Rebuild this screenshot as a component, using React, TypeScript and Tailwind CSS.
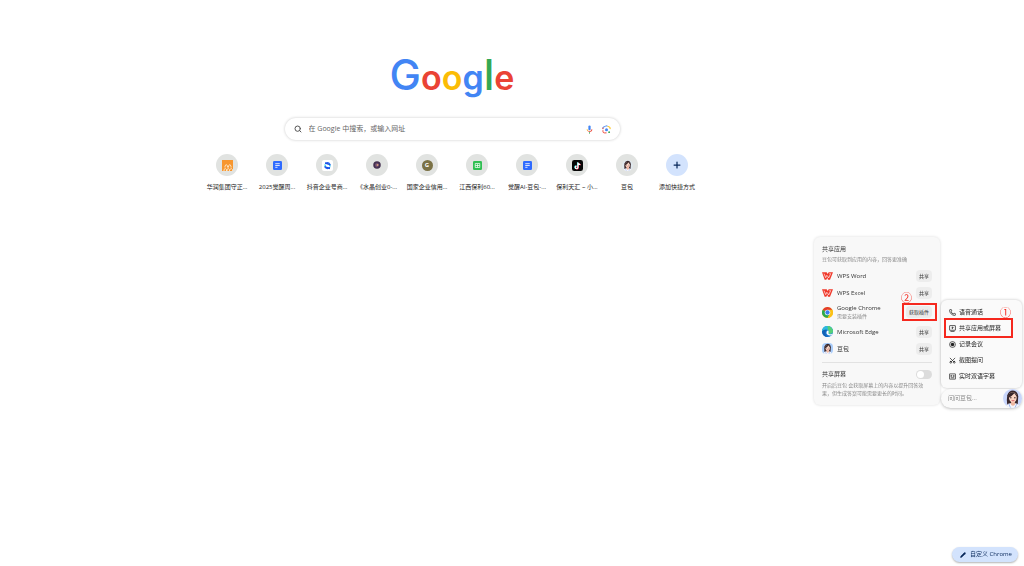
import React, { useState } from 'react';
import { Pencil, Phone, Plus, Scissors, Search } from 'lucide-react';

const DocIcon = () => (
  <svg viewBox="0 0 20 20" className="size-[9px]">
    <rect width="20" height="20" rx="3" fill="#2f6bff" />
    <path d="M5 6h10M5 10h10M5 14h5" stroke="#fff" strokeWidth="1.8" />
  </svg>
);

const CrownIcon = () => (
  <svg viewBox="0 0 22 22" className="size-[11px]">
    <rect width="22" height="22" fill="#f7962f" />
    <path d="M6 15v-3l2.500-3 2.500 3v3M13 15v-3l2.500-3 2.500 3v3M4 22v-3l2.500-2 2.500 2v3M10 22v-3l2.500-2 2.500 2v3M16 19l2.500-2 2.500 2v3" fill="none" stroke="#fff3dc" strokeWidth="1.6" />
  </svg>
);

const SwirlIcon = () => (
  <svg viewBox="0 0 22 22" className="size-[11px]">
    <rect width="22" height="22" rx="4" fill="#fff" />
    <path d="M6 8.500Q7 4 11 4q4 0 6 4.500l-5-1.500z" fill="#1b62f5" />
    <path d="M5 14q1 4 6 4.500 5-.5 6-5l-5 1.500z" fill="#1b62f5" />
    <path d="M5 8v5l3 2v-5zM17 14V9l-3-2v5z" fill="#3fe0ef" />
    <path d="M6 4.500l11 3.500v3L6 7.500zM5 12l11 3.500v3L5 15z" fill="#1b50e5" />
  </svg>
);

const CrystalIcon = () => (
  <svg viewBox="0 0 16 16" className="size-[8px]">
    <circle cx="8" cy="8" r="7.500" fill="#43304f" />
    <path d="M4 6l4-3 4 3-1 5-4 2-3-3z" fill="#6d4d70" />
    <circle cx="9" cy="8" r="2" fill="#d9a27e" />
  </svg>
);

const SheetIcon = () => (
  <svg viewBox="0 0 20 20" className="size-[9px]">
    <rect width="20" height="20" rx="3" fill="#2fbf52" />
    <path d="M5 5.500h10v9H5zM5 10h10M10 7v7" fill="none" stroke="#fff" strokeWidth="1.600" />
  </svg>
);

const NoteIcon = () => (
  <svg viewBox="0 0 24 24" className="size-[11px]">
    <rect width="24" height="24" rx="5" fill="#060606" />
    <path d="M12 5v10.500a3 3 0 1 1-3-3M12 5.500q1 4 5 4" fill="none" stroke="#25f4ee" strokeWidth="2.400" />
    <path d="M14 6v10.500a3 3 0 1 1-3-3M14 6.500q1 4 5 4" fill="none" stroke="#fe2c55" strokeWidth="2.400" />
    <path d="M13 5.500V16a3 3 0 1 1-3-3M13 6q1 4 5 4" fill="none" stroke="#fff" strokeWidth="2.400" />
  </svg>
);

const Avatar = ({ className, background }: { className: string; background: string }) => (
  <svg viewBox="0 0 40 40" className={className}>
    <rect width="40" height="40" fill={background} />
    <path d="M9 34Q7 24 9 13 12 3 21 3q10 1 11 12l-1 18z" fill="#38272b" />
    <path d="M5 40q2-9 10-10h11q8 1 9 10z" fill="#f5f6fb" />
    <path d="M17 25h8v8q-4 4-8 0z" fill="#eeb39c" />
    <path d="M12 16q0-9 9-9 8 1 8 9 0 12-8 13-8-1-9-13z" fill="#fbd5c4" />
    <path d="M10 20Q11 8 20 7q9 0 11 12L24 9q-6 7-14 11z" fill="#38272b" />
    <circle cx="16.500" cy="18.500" r="1.500" fill="#3b2525" />
    <circle cx="25" cy="18.500" r="1.500" fill="#3b2525" />
    <path d="M18 24q3 2 6 0" fill="none" stroke="#cf4b55" strokeWidth="1.800" />
    <path d="M12 31l4 9M29 31l-4 9" stroke="#7d9ce8" strokeWidth="1.500" />
  </svg>
);

const MicIcon = () => (
  <svg viewBox="0 0 24 24" className="h-[9px] w-[9px]">
    <rect x="9" y="1" width="6" height="13" rx="3" fill="#4285f4" />
    <path d="M11 18h2v5h-2z" fill="#34a853" />
    <path d="M4.500 11q0 3 2 5l1.500-1.500Q6.700 13 6.700 11z" fill="#fbbc04" />
    <path d="M17.300 11q0 5-5.300 5-2.500 0-4-1.500L6.500 16q2 2.200 5.500 2.200 7.500-.2 7.500-7.200z" fill="#ea4335" />
  </svg>
);

const LensIcon = () => (
  <svg viewBox="0 0 24 24" className="size-[9px]" fill="none" strokeWidth="2.600">
    <path d="M2.500 10V8q0-3.500 3.500-3.500h2L9.500 2.500h5" stroke="#4285f4" />
    <path d="M14 2.500l2 2h2q3.500 0 3.500 3.500v3" stroke="#fbbc04" />
    <path d="M2.500 14v3q0 4 4 4H12" stroke="#ea4335" />
    <path d="M2.500 7v4" stroke="#ea4335" />
    <circle cx="12" cy="12.500" r="4" fill="#4285f4" />
    <circle cx="19" cy="19" r="2.500" fill="#34a853" />
  </svg>
);

const WpsIcon = () => (
  <svg viewBox="0 0 33 24" className="h-2 w-[11px]">
    <path d="M0 1h14l3 5 3-5h13l-9 22h-6l-2-6-3 6H8z" fill="#f0392b" />
    <path d="M6 5l5 12 4-8M16 11l4 7 6-13h-4" fill="none" stroke="#fff" strokeWidth="2" />
  </svg>
);

const ChromeIcon = () => (
  <svg viewBox="0 0 24 24" className="size-[11px]">
    <circle cx="12" cy="12" r="12" fill="#fbc116" />
    <path d="M12 12 1.600 6A12 12 0 0 1 22.400 6z" fill="#e33b2e" />
    <path d="M12 12 1.600 6A12 12 0 0 0 12 24l5-9z" fill="#2da94f" />
    <path d="M12 6h10.400A12 12 0 0 1 12 24l5-9z" fill="#fbc116" />
    <circle cx="12" cy="12" r="6" fill="#fff" />
    <circle cx="12" cy="12" r="4.700" fill="#3b7ded" />
  </svg>
);

const EdgeIcon = () => (
  <svg viewBox="0 0 24 24" className="size-[11px]">
    <circle cx="12" cy="12" r="12" fill="#1474cf" />
    <path d="M0 12A12 12 0 0 1 24 11q0 6-6 6-4 0-4-2 2-5-3-7-6-1-11 4z" fill="#2fb9dd" />
    <path d="M12 0a12 12 0 0 1 12 11q0 6-6 6-4 0-4-2 2-4-1-7z" fill="#55cf78" />
    <path d="M13 9q-5 3-3 8 3 5 11 3l2-3q-9 3-9-2 2-3-1-6z" fill="#fff" />
    <path d="M10 9Q5 13 8 19q2 4 6 5-12 0-14-12 4-5 10-3z" fill="#1260b4" />
  </svg>
);

const ShareScreenIcon = () => (
  <svg viewBox="0 0 24 24" className="size-[7px]" fill="none" stroke="#222" strokeWidth="2.500">
    <rect x="2" y="2" width="20" height="16" rx="1" />
    <path d="M12 14V7M8.500 10 12 6.500l3.500 3.500M5 22h14" />
  </svg>
);

const RecordIcon = () => (
  <svg viewBox="0 0 24 24" className="size-[7px]">
    <circle cx="12" cy="12" r="10" fill="none" stroke="#222" strokeWidth="2.500" />
    <circle cx="12" cy="12" r="6" fill="#222" />
  </svg>
);

const CaptionIcon = () => (
  <svg viewBox="0 0 24 24" className="size-[7px]" fill="none" stroke="#222" strokeWidth="2.400">
    <rect x="1.500" y="3" width="21" height="18" rx="1" />
    <path d="M5 8.500h6M14 8.500h5M5 12.500h5M13 12.500h6M6 16.500h12" />
  </svg>
);

const shortcuts = [
  { label: '华润集团守正...', icon: <CrownIcon /> },
  { label: '2025觉醒周...', icon: <DocIcon /> },
  { label: '抖音企业号商...', icon: <SwirlIcon /> },
  { label: '《水晶创业0-...', icon: <CrystalIcon /> },
  {
    label: '国家企业信用...',
    icon: <span className="flex size-[11px] items-center justify-center rounded-full bg-[#7a7145] text-[6px] font-bold text-white">G</span>,
  },
  { label: '江西保利60...', icon: <SheetIcon /> },
  { label: '觉醒AI-豆包-...', icon: <DocIcon /> },
  { label: '保利天汇 ~ 小...', icon: <NoteIcon /> },
  { label: '豆包', icon: <Avatar className="size-[11px] rounded-full" background="#dfe8ee" /> },
];

const apps = [
  { name: 'WPS Word', icon: <WpsIcon /> },
  { name: 'WPS Excel', icon: <WpsIcon /> },
  { name: 'Google Chrome', icon: <ChromeIcon />, note: '需要安装插件' },
  { name: 'Microsoft Edge', icon: <EdgeIcon /> },
  { name: '豆包', icon: <Avatar className="size-[11px] rounded-sm" background="#a9cdfb" /> },
];

const menuItems = [
  { label: '语音通话', icon: <Phone size={7} strokeWidth={2.5} /> },
  { label: '共享应用或屏幕', icon: <ShareScreenIcon />, marked: true },
  { label: '记录会议', icon: <RecordIcon /> },
  { label: '截图提问', icon: <Scissors size={7} strokeWidth={2.5} className="-rotate-90" /> },
  { label: '实时双语字幕', icon: <CaptionIcon /> },
];

const Logo = () => (
  <h1 className="font-['Inter',sans-serif] text-[34px] leading-[48px] font-semibold">
    <span className="text-[42px] font-medium text-[#4285f4]">G</span>
    <span className="text-[#ea4335]">o</span>
    <span className="text-[#fbbc05]">o</span>
    <span className="text-[#4285f4]">g</span>
    <span className="text-[42px] font-medium text-[#34a853]">l</span>
    <span className="text-[#ea4335]">e</span>
  </h1>
);

const SharePanel = () => {
  const [shareScreen, setShareScreen] = useState(false);

  return (
    <section className="w-[126px] rounded-md bg-[#f8f8f8] p-2 shadow-[0_0_3px_rgba(0,0,0,0.15)]">
      <h2 className="text-[6px] leading-2 text-[#333]">共享应用</h2>
      <p className="mt-[2px] text-[5px] leading-2 text-[#888]">豆包可获取到应用的内容，回答更准确</p>
      <ul className="mt-1">
        {apps.map(app => (
          <li key={app.name} className={`flex items-center ${app.note ? 'h-[22px]' : 'h-[17px]'}`}>
            {app.icon}
            <div className="ml-1 flex-1">
              <p className="text-[6px] leading-2 text-[#333]">{app.name}</p>
              {app.note && <p className="text-[5px] leading-2 text-[#888]">{app.note}</p>}
            </div>
            {app.note ? (
              <div className="relative flex">
                <button className="h-3 rounded-sm bg-[#ebebeb] px-[3px] text-[5px] leading-3 text-[#333]">获取插件</button>
                <span className="pointer-events-none absolute -top-[3px] -right-[5px] -bottom-[3px] -left-1 border-2 border-[#f5281e]" />
                <span className="absolute -top-[14px] -left-[5px] text-[11px] leading-3 text-[#f5281e]">②</span>
              </div>
            ) : (
              <button className="h-3 rounded-sm bg-[#ededed] px-[3px] text-[5px] leading-3 text-[#333]">共享</button>
            )}
          </li>
        ))}
      </ul>
      <hr className="mt-[5px] border-[#e2e2e2]" />
      <label className="mt-[6px] flex h-[10px] items-center justify-between text-[6px] text-[#333]">
        共享屏幕
        <input
          type="checkbox"
          role="switch"
          checked={shareScreen}
          onChange={e => setShareScreen(e.target.checked)}
          className="h-[9px] w-4 appearance-none rounded-full bg-[#dcdcdc] p-px before:block before:size-[7px] before:rounded-full before:bg-white checked:bg-blue-500 checked:before:ml-[7px]"
        />
      </label>
      <p className="mt-[2px] text-[5px] leading-2 text-[#888]">
        开启后豆包 会获取屏幕上的内容以提升回答效
        <br />
        果，但生成答案可能需要更长的时间。
      </p>
    </section>
  );
};

const AssistantMenu = () => (
  <div className="w-[81px]">
    <ul className="rounded-md bg-[#fafafa] py-1 shadow-[0_0_3px_rgba(0,0,0,0.25)]">
      {menuItems.map(item => (
        <li key={item.label} className="relative">
          <button className="flex h-4 w-full items-center gap-[3px] pl-2 text-[6px] text-[#222]">
            {item.icon}
            {item.label}
          </button>
          {item.marked && (
            <>
              <span className="pointer-events-none absolute -top-[2px] right-[9px] -bottom-[2px] left-[3px] border-2 border-[#f5281e]" />
              <span className="absolute -top-[13px] right-[11px] text-[11px] leading-3 text-[#f5281e]">①</span>
            </>
          )}
        </li>
      ))}
    </ul>
    <div className="mt-px flex h-[19px] items-center rounded-full bg-[#fafafa] pl-[7px] shadow-[0_1px_3px_rgba(0,0,0,0.25)]">
      <input aria-label="问问豆包" placeholder="问问豆包..." className="min-w-0 flex-1 bg-transparent text-[6px] outline-none placeholder:text-[#888]" />
      <Avatar className="size-[19px] rounded-full" background="#c9d6fb" />
    </div>
  </div>
);

const App: React.FC = () => {
  return (
    <div className="min-h-screen bg-white font-['Open_Sans','Noto_Sans_CJK_SC',sans-serif] text-[#222]">
      <main className="flex flex-col items-center pt-[51px] pr-[120px]">
        <Logo />
        <form className="mt-4 flex h-[22px] w-[335px] items-center rounded-full bg-white px-[9px] shadow-[0_0_3px_rgba(0,0,0,0.22)]">
          <Search size={8} strokeWidth={3} className="text-[#555]" />
          <input
            aria-label="搜索"
            placeholder="在 Google 中搜索，或输入网址"
            className="ml-[7px] flex-1 bg-transparent text-[7px] outline-none placeholder:text-[#666]"
          />
          <button type="button" aria-label="语音搜索"><MicIcon /></button>
          <button type="button" aria-label="图片搜索" className="ml-2"><LensIcon /></button>
        </form>

        <nav className="mt-[14px] flex">
          {shortcuts.map(item => (
            <a key={item.label} href="#" className="flex w-[50px] flex-col items-center">
              <span className="flex size-[22px] items-center justify-center rounded-full bg-[#e1e3e1]">{item.icon}</span>
              <span className="mt-[6px] text-[6px] leading-[10px] whitespace-nowrap">{item.label}</span>
            </a>
          ))}
          <button className="flex w-[50px] flex-col items-center">
            <span className="flex size-[22px] items-center justify-center rounded-full bg-[#d3e3fd]">
              <Plus size={10} strokeWidth={3} className="text-[#0b2a5c]" />
            </span>
            <span className="mt-[6px] text-[6px] leading-[10px] whitespace-nowrap">添加快捷方式</span>
          </button>
        </nav>
      </main>

      <aside className="fixed top-[237px] right-[2px] flex items-start gap-px">
        <SharePanel />
        <div className="pt-[63px]">
          <AssistantMenu />
        </div>
      </aside>

      <button className="fixed right-[6px] bottom-1 flex h-[15px] items-center gap-1 rounded-full bg-[#d3e3fd] pr-[6px] pl-2 text-[6px] text-[#0b2a5c] shadow-[0_1px_2px_rgba(0,0,0,0.3)]">
        <Pencil size={6} fill="currentColor" />
        自定义 Chrome
      </button>
    </div>
  );
};

export default App;
